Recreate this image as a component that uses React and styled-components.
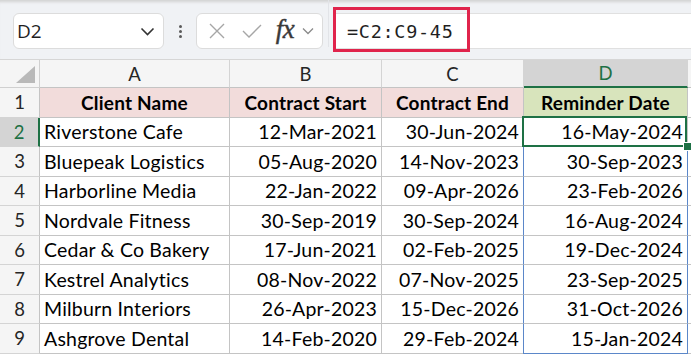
import React from "react";
import styled, { createGlobalStyle, css } from "styled-components";

const Global = createGlobalStyle`
  html, body { margin: 0; padding: 0; background: #ffffff; overflow: hidden; }
  * { box-sizing: border-box; }
`;

const Page = styled.div`
  width: 691px;
  height: 358px;
  overflow: hidden;
  background: #ffffff;
`;

const FormulaBar = styled.div`
  position: relative;
  height: 60px;
  background: #f0f2f5;
  border-bottom: 1px solid #d6d6d6;
  display: flex;
  align-items: flex-start;
  padding: 13px 0 0 13px;
  box-shadow: inset 0 4px 3px -2px #d2d2d2;
`;

const NameBox = styled.div`
  width: 151px;
  height: 36px;
  background: #ffffff;
  border: 1px solid #dcdcdc;
  border-radius: 6px;
  display: flex;
  align-items: center;
  justify-content: space-between;
  padding: 0 8px 0 3px;
  font-family: "Open Sans", "Noto Sans", sans-serif;
  font-size: 19px;
  color: #1f1f1f;
`;

const Dots = styled.div`
  width: 32px;
  height: 36px;
  display: flex;
  flex-direction: column;
  align-items: center;
  justify-content: center;
  gap: 2px;
  span {
    width: 3px;
    height: 3px;
    border-radius: 50%;
    background: #5a5a5a;
  }
`;

const FxBox = styled.div`
  width: 127px;
  height: 36px;
  background: #ffffff;
  border: 1px solid #dcdcdc;
  border-radius: 6px;
  display: flex;
  align-items: center;
  padding-left: 2px;
`;

const FxIcon = styled.span`
  display: inline-flex;
  align-items: center;
  justify-content: center;
  width: ${(p) => p.$w}px;
  height: 30px;
`;

const FxText = styled.span`
  font-family: "Liberation Serif", "DejaVu Serif", serif;
  font-style: italic;
  font-size: 27px;
  color: #3a3a3a;
  width: 30px;
  text-align: center;
  letter-spacing: -0.5px;
  line-height: 1;
  margin-top: -3px;
  -webkit-text-stroke: 0.4px #3a3a3a;
`;

const Divider = styled.div`
  width: 1px;
  height: 47px;
  margin: -13px 4px 0 5px;
  background: #e2e4e8;
`;

const FormulaInput = styled.div`
  flex: 1;
  height: 36px;
  background: #ffffff;
  border-top: 1px solid #e0e0e0;
  border-bottom: 1px solid #e0e0e0;
  display: flex;
  align-items: center;
  padding-left: 14px;
  font-family: "DejaVu Sans Mono", "Liberation Mono", monospace;
  font-size: 18.5px;
  letter-spacing: 0.7px;
  color: #1f1f1f;
`;

const Highlight = styled.div`
  position: absolute;
  left: 333px;
  top: 7px;
  width: 137px;
  height: 45px;
  border: 3px solid #e0244c;
  pointer-events: none;
`;

const Grid = styled.div`
  display: grid;
  grid-template-columns: 40px 190px 152px 142px 164px 1fr;
  grid-template-rows: 28px repeat(9, 29.5px);
  font-family: "Lato", "Open Sans", sans-serif;
  font-size: 19.5px;
  letter-spacing: 0.2px;
  color: #000;
`;

const Corner = styled.div`
  position: relative;
  background: #f5f5f5;
  border-right: 1px solid #d0d0d0;
  border-bottom: 1px solid #d0d0d0;
  &::after {
    content: "";
    position: absolute;
    right: 4px;
    bottom: 4px;
    width: 0;
    height: 0;
    border-style: solid;
    border-width: 0 0 17px 19px;
    border-color: transparent transparent #b9b9b9 transparent;
  }
`;

const ColHead = styled.div`
  display: flex;
  align-items: center;
  justify-content: center;
  background: #f5f5f5;
  border-right: 1px solid #d4d4d4;
  border-bottom: 1px solid #c4c4c4;
  color: #262626;
  font-size: 18.5px;
  letter-spacing: 0;
  ${(p) =>
    p.$active &&
    css`
      background: #d4d4d4;
      color: #1e7145;
      border-bottom: 2px solid #1e7145;
    `}
`;

const RowHead = styled.div`
  display: flex;
  align-items: center;
  justify-content: center;
  background: #f5f5f5;
  border-right: 1px solid #c4c4c4;
  border-bottom: 1px solid #d4d4d4;
  color: #262626;
  font-size: 18.5px;
  letter-spacing: 0;
  ${(p) =>
    p.$active &&
    css`
      background: #d4d4d4;
      color: #1e7145;
      border-right: 2px solid #1e7145;
    `}
`;

const Cell = styled.div`
  position: relative;
  display: flex;
  align-items: center;
  justify-content: ${(p) => (p.$align === "right" ? "flex-end" : p.$align === "center" ? "center" : "flex-start")};
  padding: 0 4px;
  white-space: nowrap;
  background: ${(p) => p.$bg || "#ffffff"};
  border-right: 1px solid #c4c4c4;
  border-bottom: 1px solid #c4c4c4;
  font-weight: ${(p) => (p.$bold ? 700 : 400)};
  font-size: ${(p) => (p.$bold ? "19px" : "inherit")};
  ${(p) =>
    p.$spill &&
    css`
      border-left: 1px solid #5b87c9;
      border-right: 1px solid #5b87c9;
      margin-left: -1px;
    `}
  ${(p) =>
    p.$spillEnd &&
    css`
      border-bottom: 1px solid #5b87c9;
    `}
  ${(p) =>
    p.$selected &&
    css`
      &::before {
        content: "";
        position: absolute;
        left: -2px;
        top: -2px;
        right: 0px;
        bottom: -1px;
        border: 2px solid #1e7145;
        pointer-events: none;
      }
      &::after {
        content: "";
        position: absolute;
        right: -5px;
        bottom: -5px;
        width: 7px;
        height: 7px;
        background: #1e7145;
        border: 1px solid #ffffff;
        z-index: 2;
      }
    `}
`;

const rows = [
  ["Riverstone Cafe", "12-Mar-2021", "30-Jun-2024", "16-May-2024"],
  ["Bluepeak Logistics", "05-Aug-2020", "14-Nov-2023", "30-Sep-2023"],
  ["Harborline Media", "22-Jan-2022", "09-Apr-2026", "23-Feb-2026"],
  ["Nordvale Fitness", "30-Sep-2019", "30-Sep-2024", "16-Aug-2024"],
  ["Cedar & Co Bakery", "17-Jun-2021", "02-Feb-2025", "19-Dec-2024"],
  ["Kestrel Analytics", "08-Nov-2022", "07-Nov-2025", "23-Sep-2025"],
  ["Milburn Interiors", "26-Apr-2023", "15-Dec-2026", "31-Oct-2026"],
  ["Ashgrove Dental", "14-Feb-2020", "29-Feb-2024", "15-Jan-2024"],
];

const PINK = "#f2dcdb";
const GREEN = "#d8e4bc";

export default function App() {
  return (
    <Page>
      <Global />
      <FormulaBar>
        <NameBox>
          <span>D2</span>
          <svg width="15" height="9" viewBox="0 0 15 9">
            <path d="M1.5 1.5 L7.5 7.5 L13.5 1.5" fill="none" stroke="#333" strokeWidth="1.6" />
          </svg>
        </NameBox>
        <Dots>
          <span />
          <span />
          <span />
        </Dots>
        <FxBox>
          <FxIcon $w={35}>
            <svg width="18" height="16" viewBox="0 0 18 16">
              <path d="M2 1 L16 15 M16 1 L2 15" stroke="#a6a6a6" strokeWidth="1.4" fill="none" />
            </svg>
          </FxIcon>
          <FxIcon $w={36}>
            <svg width="20" height="14" viewBox="0 0 20 14">
              <path d="M1 7 L7 13 L19 1" stroke="#a6a6a6" strokeWidth="1.4" fill="none" />
            </svg>
          </FxIcon>
          <FxText>fx</FxText>
          <FxIcon $w={16}>
            <svg width="12" height="8" viewBox="0 0 12 8">
              <path d="M1 1.5 L6 6.5 L11 1.5" stroke="#8a8a8a" strokeWidth="1.3" fill="none" />
            </svg>
          </FxIcon>
        </FxBox>
        <Divider />
        <FormulaInput>=C2:C9-45</FormulaInput>
        <Highlight />
      </FormulaBar>
      <Grid>
        <Corner />
        <ColHead>A</ColHead>
        <ColHead>B</ColHead>
        <ColHead>C</ColHead>
        <ColHead $active>D</ColHead>
        <ColHead />

        <RowHead>1</RowHead>
        <Cell $bg={PINK} $bold $align="center">Client Name</Cell>
        <Cell $bg={PINK} $bold $align="center">Contract Start</Cell>
        <Cell $bg={PINK} $bold $align="center">Contract End</Cell>
        <Cell $bg={GREEN} $bold $align="center">Reminder Date</Cell>
        <Cell />

        {rows.map((r, i) => (
          <React.Fragment key={i}>
            <RowHead $active={i === 0}>{i + 2}</RowHead>
            <Cell>{r[0]}</Cell>
            <Cell $align="right">{r[1]}</Cell>
            <Cell $align="right">{r[2]}</Cell>
            <Cell $align="right" $spill={i > 0} $spillEnd={i === rows.length - 1} $selected={i === 0}>
              {r[3]}
            </Cell>
            <Cell />
          </React.Fragment>
        ))}
      </Grid>
    </Page>
  );
}
